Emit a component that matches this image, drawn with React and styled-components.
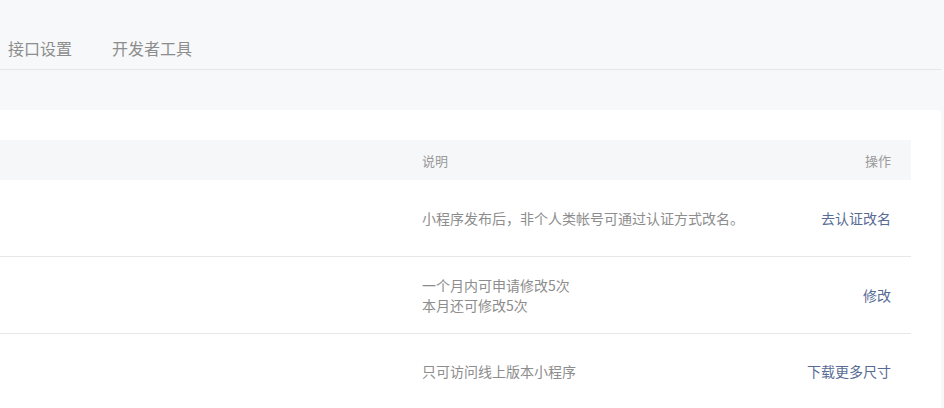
import styled, { createGlobalStyle } from "styled-components";

const GlobalStyle = createGlobalStyle`
  html, body {
    margin: 0;
    padding: 0;
    background: #f7f8fa;
    font-family: "Noto Sans CJK SC", "Noto Sans", sans-serif;
  }
`;

const rows = [
  {
    lines: ["小程序发布后，非个人类帐号可通过认证方式改名。"],
    action: "去认证改名",
  },
  {
    lines: ["一个月内可申请修改5次", "本月还可修改5次"],
    action: "修改",
  },
  {
    lines: ["只可访问线上版本小程序"],
    action: "下载更多尺寸",
  },
];

export default function App() {
  return (
    <>
      <GlobalStyle />
      <StyledPage>
        <StyledTabBar>
          <StyledTab>接口设置</StyledTab>
          <StyledTab>开发者工具</StyledTab>
        </StyledTabBar>
        <StyledPanel>
          <StyledTable>
            <StyledHeadRow>
              <span />
              <StyledHeadCell>说明</StyledHeadCell>
              <StyledHeadCell $right>操作</StyledHeadCell>
            </StyledHeadRow>
            {rows.map((row) => (
              <StyledRow key={row.action}>
                <span />
                <StyledDesc>
                  {row.lines.map((line) => (
                    <div key={line}>{line}</div>
                  ))}
                </StyledDesc>
                <StyledAction href="#">{row.action}</StyledAction>
              </StyledRow>
            ))}
          </StyledTable>
        </StyledPanel>
      </StyledPage>
    </>
  );
}

const StyledPage = styled.div`
  width: 941px;
  display: flex;
  flex-direction: column;
`;

const StyledTabBar = styled.nav`
  display: flex;
  align-items: flex-end;
  gap: 40px;
  height: 69px;
  padding-left: 8px;
  border-bottom: 1px solid #e4e6eb;
  box-sizing: content-box;
`;

const StyledTab = styled.a`
  font-size: 16px;
  line-height: 22px;
  color: #8d8d8d;
  padding-bottom: 10px;
  cursor: pointer;
`;

const StyledPanel = styled.section`
  margin-top: 40px;
  background: #fff;
  border-radius: 0 4px 0 0;
  padding: 30px 30px 0 0;
`;

const StyledTable = styled.div`
  display: flex;
  flex-direction: column;
`;

const StyledHeadRow = styled.div`
  display: grid;
  grid-template-columns: 402px minmax(0, 1fr) 160px;
  align-items: center;
  height: 40px;
  background: #f6f7f9;
`;

const StyledHeadCell = styled.div`
  padding: 0 20px;
  font-size: 13px;
  color: #9a9a9a;
  text-align: ${({ $right }) => ($right ? "right" : "left")};
`;

const StyledRow = styled.div`
  display: grid;
  grid-template-columns: 402px minmax(0, 1fr) 160px;
  align-items: center;
  min-height: 76px;
  border-bottom: 1px solid #e7e7eb;

  &:last-child {
    min-height: 74px;
    border-bottom: none;
  }
`;

const StyledDesc = styled.div`
  padding: 0 20px;
  font-size: 14px;
  line-height: 20px;
  color: #8d8d8d;
  white-space: nowrap;
`;

const StyledAction = styled.a`
  padding: 0 20px;
  font-size: 14px;
  line-height: 20px;
  color: #576b95;
  text-align: right;
  text-decoration: none;
  white-space: nowrap;
`;
